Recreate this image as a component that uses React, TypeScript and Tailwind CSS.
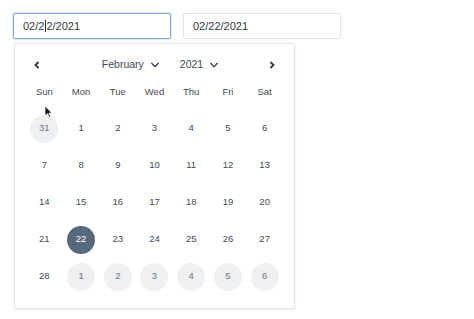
const days = ['Sun', 'Mon', 'Tue', 'Wed', 'Thu', 'Fri', 'Sat'];

type Cell = { n: number; outside?: boolean; selected?: boolean };

const cells: Cell[] = [
  { n: 31, outside: true },
  ...Array.from({ length: 27 }, (_, i) => ({ n: i + 1, selected: i + 1 === 22 })),
  { n: 28 },
  ...[1, 2, 3, 4, 5, 6].map((n) => ({ n, outside: true })),
];

function Chevron() {
  return (
    <svg width="10" height="10" viewBox="0 0 12 12" className="ml-[6px]" fill="none">
      <path d="M2 4l4 4 4-4" stroke="#3f4a56" strokeWidth="1.6" strokeLinecap="round" strokeLinejoin="round" />
    </svg>
  );
}

export default function App() {
  return (
    <div className="relative min-h-[319px] w-[474px] bg-white font-['Liberation_Sans',Arial,sans-serif] text-[#3f4a56]">
      <div className="flex gap-[12px] pl-[13px] pt-[13px]">
        <div className="relative">
          <div className="flex h-[26px] w-[158px] items-center rounded-[2px] border border-[#86a8d8] pl-[9px] text-[11px] text-[#2f3842] shadow-[0_0_0_1px_rgba(134,168,216,0.25)]">
            02/2<span className="mx-[0.5px] inline-block h-[12px] w-px bg-[#2f3842]" />2/2021
          </div>
          <div className="absolute left-[1px] top-[30px] z-10 w-[281px] rounded-[2px] border border-[#e4e6e9] bg-white px-[11px] pb-[13px] shadow-[0_1px_3px_rgba(0,0,0,0.08)]">
            <div className="flex h-[40px] items-center justify-between pt-[2px] text-[10.5px]">
              <svg width="10" height="10" viewBox="0 0 10 10" className="ml-[6px]">
                <path d="M6.5 2L3.5 5l3 3" stroke="#2f3842" strokeWidth="1.8" fill="none" />
              </svg>
              <div className="ml-[12px] flex items-center">
                <span className="flex items-center">February<Chevron /></span>
                <span className="ml-[20px] flex items-center">2021<Chevron /></span>
              </div>
              <svg width="10" height="10" viewBox="0 0 10 10" className="mr-[6px]">
                <path d="M3.5 2l3 3-3 3" stroke="#2f3842" strokeWidth="1.8" fill="none" />
              </svg>
            </div>
            <div className="grid grid-cols-7 text-[9.5px]">
              {days.map((d) => (
                <div key={d} className="flex h-[22px] items-center justify-center pb-[6px]">
                  {d}
                </div>
              ))}
            </div>
            <div className="mt-[4px] grid grid-cols-7 text-[9.5px]">
              {cells.map((c, i) => (
                <div key={i} className="flex h-[37px] items-center justify-center">
                  <div
                    className={
                      c.selected
                        ? 'flex h-[28px] w-[28px] items-center justify-center rounded-full bg-[#56697d] text-white'
                        : c.outside
                          ? 'flex h-[28px] w-[28px] items-center justify-center rounded-full bg-[#eff0f2] text-[#6b7480]'
                          : 'flex h-[28px] w-[28px] items-center justify-center rounded-full'
                    }
                  >
                    {c.n}
                  </div>
                </div>
              ))}
            </div>
          </div>
        </div>
        <div className="flex h-[26px] w-[158px] items-center rounded-[2px] border border-[#e3e5e8] pl-[9px] text-[11px] text-[#2f3842]">
          02/22/2021
        </div>
      </div>
      <svg className="absolute left-[44px] top-[105px] z-20" width="9" height="13" viewBox="0 0 9 13">
        <path d="M1 1v10l2.5-2.3 1.8 3.8 1.4-.7-1.8-3.7H8z" fill="#111" stroke="#fff" strokeWidth="0.8" />
      </svg>
    </div>
  );
}
